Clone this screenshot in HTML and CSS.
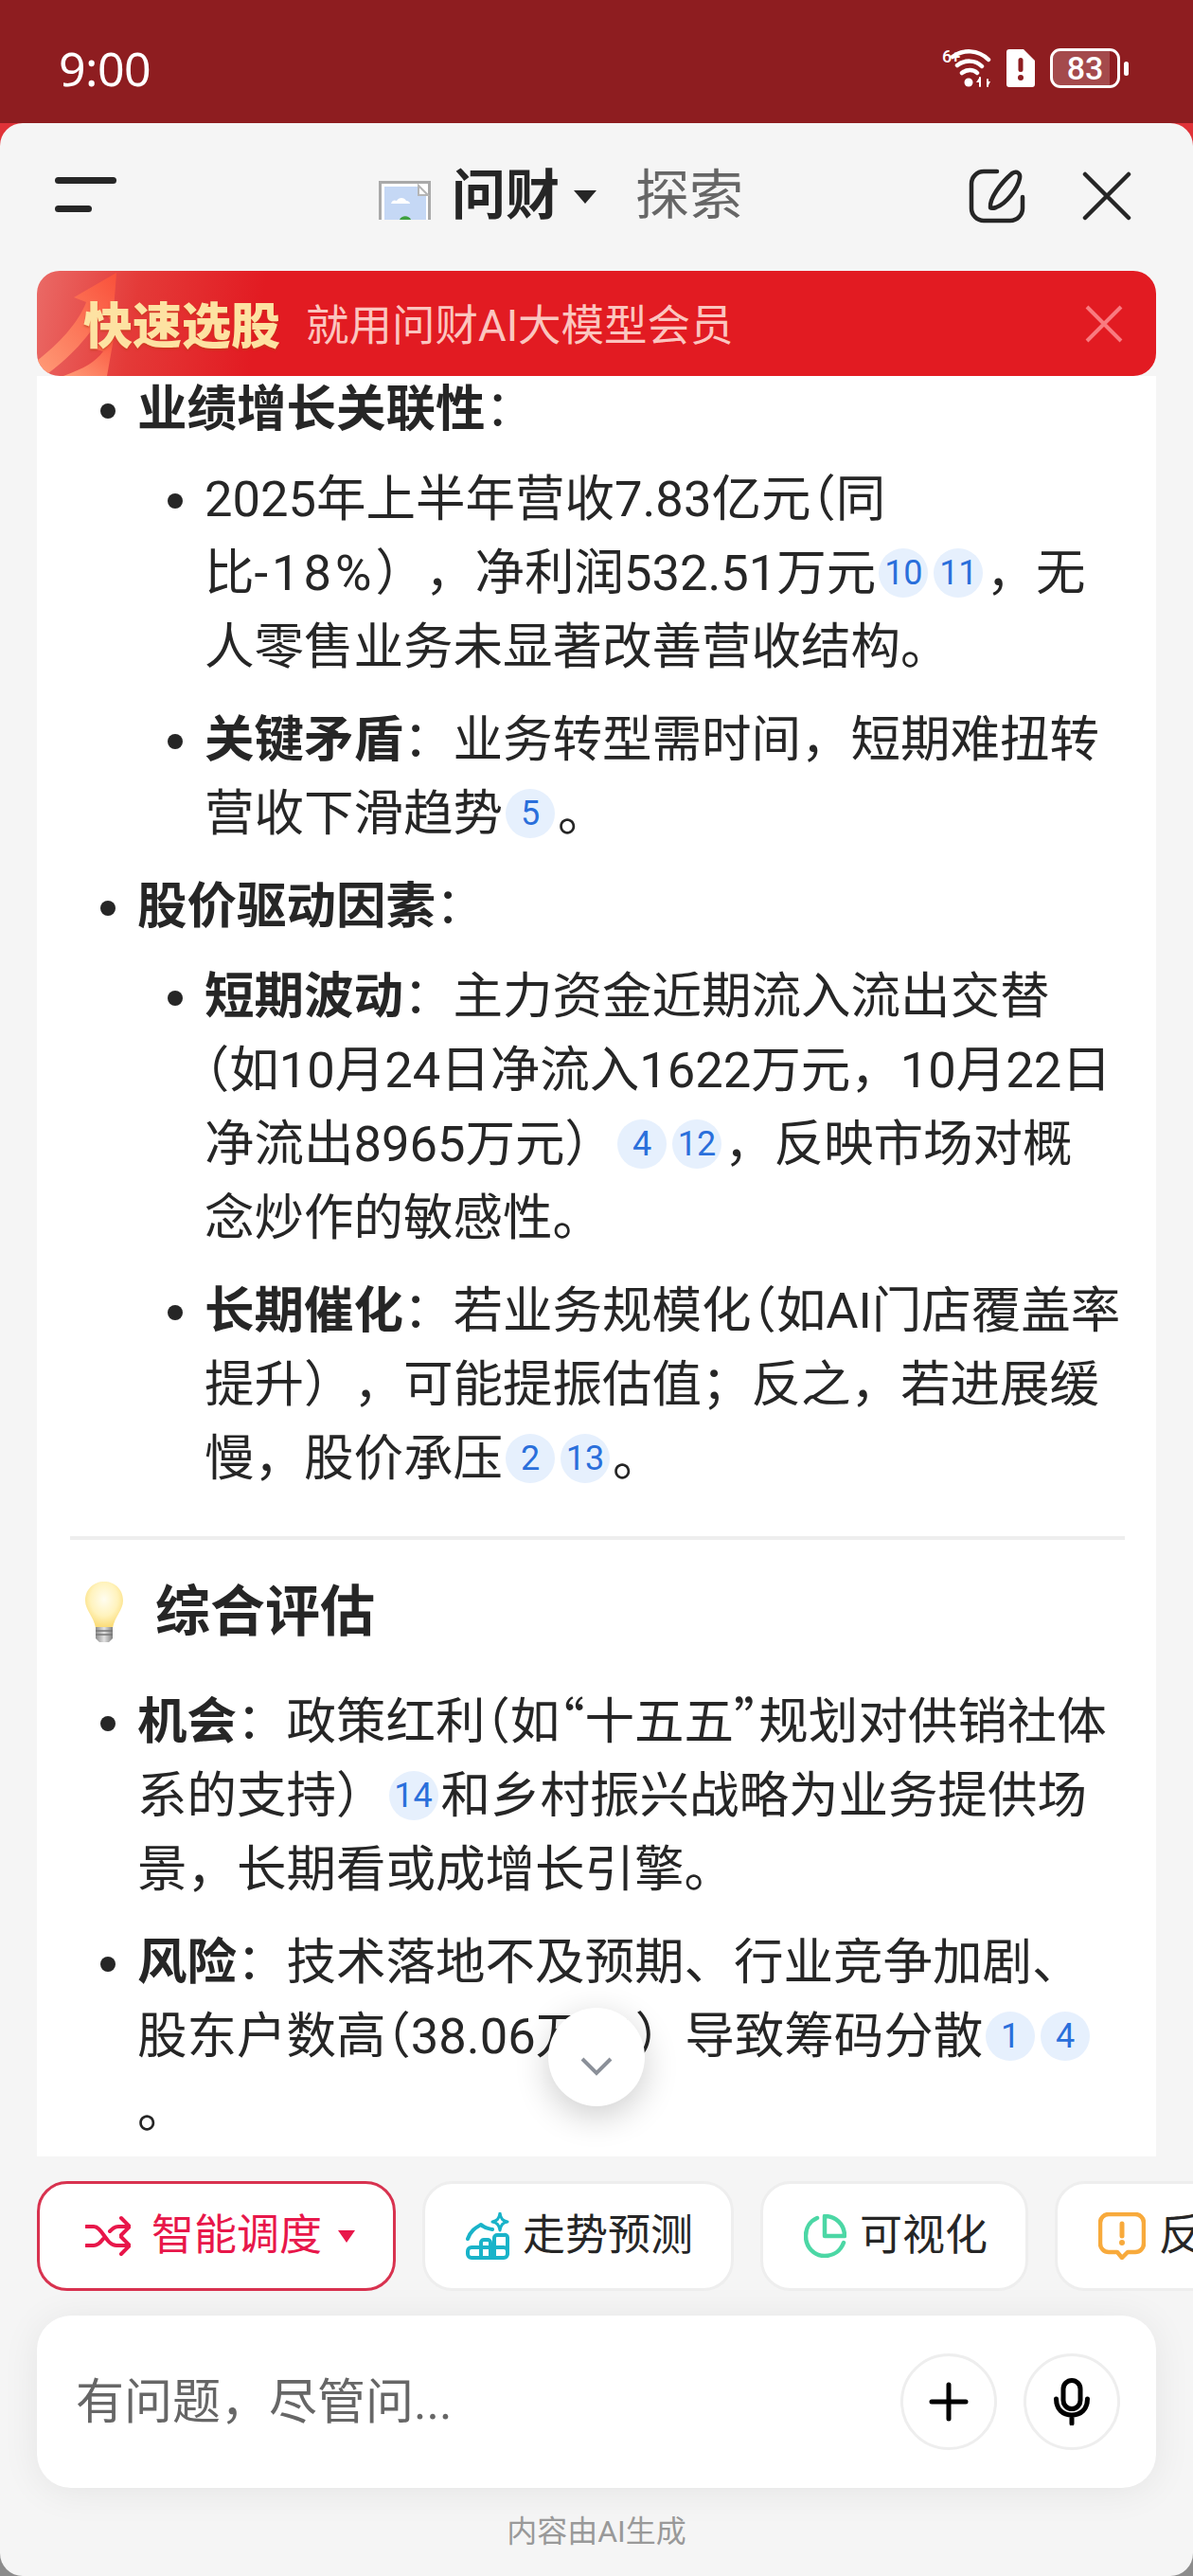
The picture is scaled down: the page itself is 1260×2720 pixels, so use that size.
FILE: index.html
```html
<!DOCTYPE html>
<html lang="zh-CN">
<head>
  <meta charset="UTF-8" />
  <meta name="viewport" content="width=device-width, initial-scale=1.0" />
  <title>问财</title>
  <link rel="stylesheet" href="styles.css">
</head>
<body>
  <div class="statusbar">
    <span class="time">9:00</span>
    <div class="status-icons">
      <div class="wifi">
        <span class="wifi-tag">6+</span>
        <svg width="50" height="42" viewBox="0 0 50 42" fill="none" stroke="#fff" stroke-width="4.5" stroke-linecap="round">
          <path d="M6 9C17 1 33 1 44 12"/>
          <path d="M11 18c8-6 19-6 26 1"/>
          <path d="M16 26c5-4 12-4 16 0"/>
          <circle cx="23" cy="36" r="4.5" fill="#fff" stroke="none"/>
          <path d="M35 31v9M43 33v7" stroke-width="2"/>
          <path d="M35 30l-4 6h4zM43 41l3-6h-3z" fill="#fff" stroke="none"/>
        </svg>
      </div>
      <svg class="sim" width="30" height="40" viewBox="0 0 30 40">
        <path d="M3 0h15l12 12v25a3 3 0 0 1-3 3H3a3 3 0 0 1-3-3V3a3 3 0 0 1 3-3z" fill="#fff"/>
        <rect x="12.500" y="9" width="5" height="15" rx="2.500" fill="#8e1d20"/>
        <circle cx="15" cy="30" r="3" fill="#8e1d20"/>
      </svg>
      <div class="battery">
        <div class="battery-body"><span class="battery-level"></span><span class="battery-num">83</span></div>
        <span class="battery-tip"></span>
      </div>
    </div>
  </div>

  <div class="sheet">
    <div class="topbar">
      <div class="menu-icon"><span class="menu-long"></span><span class="menu-short"></span></div>
      <div class="tabs">
        <svg class="broken-img" width="55" height="41" viewBox="0 0 55 41">
          <path d="M1.500 41V1.500h52V41" fill="#fff" stroke="#a9a9a9" stroke-width="3"/>
          <path d="M6 41V6h36l8 8v27z" fill="#c5d8f5"/>
          <path d="M42 5v10h10z" fill="#fff" stroke="#b5b5b5" stroke-width="2"/>
          <path d="M13 24c1-4 4-4 6-3 2-4 8-4 10 0 3 0 4 2 4 3z" fill="#fff"/>
          <path d="M22 41c2-5 10-5 12 0z" fill="#3fa03f"/>
        </svg>
        <span class="tab-active">问财</span>
        <span class="tab-caret"></span>
        <span class="tab-other">探索</span>
      </div>
      <div class="top-actions">
        <svg width="60" height="58" viewBox="0 0 60 58" fill="none" stroke="#262626" stroke-width="4.500" stroke-linecap="round">
          <path d="M30 3H16A13 13 0 0 0 3 16v26a13 13 0 0 0 13 13h28a13 13 0 0 0 13-13V30"/>
          <path d="M23 41c-1-9 10-25 23-36 5-3 9 0 8 5-2 11-14 27-25 31-3 1-6 1-6 0z"/>
        </svg>
        <svg width="52" height="52" viewBox="0 0 52 52" fill="none" stroke="#262626" stroke-width="4.500" stroke-linecap="round">
          <path d="M3 3l46 46M49 3L3 49"/>
        </svg>
      </div>
    </div>

    <div class="banner">
      <svg class="banner-art" width="150" height="111" viewBox="0 0 150 111">
        <defs>
          <linearGradient id="arrow" x1="0" y1="1" x2="1" y2="0">
            <stop offset="0" stop-color="#ff9c78"/>
            <stop offset="1" stop-color="#f9503a"/>
          </linearGradient>
        </defs>
        <path d="M0 95C22 78 44 55 52 33L39 28 84 2 80 55 70 42C58 68 32 94 8 111H0z" fill="url(#arrow)"/>
        <path d="M28 111C50 103 62 96 70 85L60 82 82 66 74 111z" fill="url(#arrow)"/>
      </svg>
      <span class="banner-title">快速选股</span>
      <span class="banner-text">就用问财AI大模型会员</span>
      <svg class="banner-close" width="40" height="40" viewBox="0 0 40 40" fill="none" stroke="#f97b80" stroke-width="4">
        <path d="M2 2l36 36M38 2L2 38"/>
      </svg>
    </div>

    <div class="content">
      <div class="article">
        <ul class="list">
          <li><b>业绩增长关联性</b>：
            <ul class="sublist">
              <li>2025年上半年营收7.83亿元<span class="half">（</span>同<br>比<span class="wide">-18%</span>），净利润532.51万元<span class="cite">10</span><span class="cite">11</span>，无<br>人零售业务未显著改善营收结构。</li>
              <li><b>关键矛盾</b>：业务转型需时间，短期难扭转<br>营收下滑趋势<span class="cite">5</span>。</li>
            </ul>
          </li>
          <li><b>股价驱动因素</b>：
            <ul class="sublist">
              <li><b>短期波动</b>：主力资金近期流入流出交替<br><span class="half">（</span>如10月24日净流入1622万元，10月22日<br>净流出8965万元）<span class="cite">4</span><span class="cite">12</span>，反映市场对概<br>念炒作的敏感性。</li>
              <li><b>长期催化</b>：若业务规模化<span class="half">（</span>如AI门店覆盖率<br>提升），可能提振估值；反之，若进展缓<br>慢，股价承压<span class="cite">2</span><span class="cite">13</span>。</li>
            </ul>
          </li>
        </ul>
        <hr class="divider">
        <h3 class="section-title">
          <svg class="bulb" width="42" height="66" viewBox="0 0 42 66">
            <defs>
              <radialGradient id="glow" cx="0.5" cy="0.38" r="0.6">
                <stop offset="0" stop-color="#fffdf0"/>
                <stop offset="0.6" stop-color="#fff3bd"/>
                <stop offset="1" stop-color="#fbdc78"/>
              </radialGradient>
              <linearGradient id="base" x1="0" y1="0" x2="1" y2="0">
                <stop offset="0" stop-color="#8c8c8c"/>
                <stop offset="0.5" stop-color="#e2e2e2"/>
                <stop offset="1" stop-color="#808080"/>
              </linearGradient>
            </defs>
            <path d="M21 1C10 1 1 9 1 21c0 10 9 17 11 29h18c2-12 11-19 11-29C41 9 32 1 21 1z" fill="url(#glow)"/>
            <path d="M12 49h18v12l-4 4H16l-4-4z" fill="url(#base)"/>
            <path d="M12 53h18M12 57h18" stroke="#777" stroke-width="1.500"/>
          </svg>
          综合评估
        </h3>
        <ul class="list">
          <li><b>机会</b>：政策红利<span class="half">（</span>如<span class="half">“</span>十五五<span class="half">”</span>规划对供销社体<br>系的支持）<span class="cite">14</span>和乡村振兴战略为业务提供场<br>景，长期看或成增长引擎。</li>
          <li><b>风险</b>：技术落地不及预期、行业竞争加剧、<br>股东户数高<span class="half">（</span>38.06万户）导致筹码分散<span class="cite">1</span><span class="cite">4</span><br>。</li>
        </ul>
      </div>
      <div class="scroll-down">
        <svg width="34" height="20" viewBox="0 0 34 20" fill="none" stroke="#8b9099" stroke-width="4">
          <path d="M2 2l15 15L32 2"/>
        </svg>
      </div>
    </div>

    <div class="chips">
      <div class="chip chip-on">
        <svg width="48" height="44" viewBox="0 0 48 44" fill="none" stroke="#e8174a" stroke-width="4" stroke-linecap="round" stroke-linejoin="round">
          <path d="M1 12h8c9 0 13 20 24 20h12"/>
          <path d="M1 32h8c4 0 7-3 10-7M26 17c3-3 5-5 9-5h10"/>
          <path d="M38 3l9 9-9 9M38 23l9 9-9 9"/>
        </svg>
        <span class="chip-label">智能调度</span>
        <span class="chip-caret"></span>
      </div>
      <div class="chip">
        <svg width="46" height="50" viewBox="0 0 46 50" fill="none" stroke="#19b3c9" stroke-width="4" stroke-linecap="round" stroke-linejoin="round">
          <path d="M2 28c3-9 9-12 14-15 4 4 7 4 12 5"/>
          <rect x="2" y="37" width="42" height="11" rx="4"/>
          <path d="M16 48V32a3 3 0 0 1 3-3h4a3 3 0 0 1 3 3v16M30 48V27a3 3 0 0 1 3-3h7a3 3 0 0 1 4 3v16"/>
          <path d="M36 1c1 6 3 8 8 9-5 1-7 3-8 9-1-6-3-8-8-9 5-1 7-3 8-9z" stroke-width="3"/>
        </svg>
        <span class="chip-label">走势预测</span>
      </div>
      <div class="chip">
        <svg width="45" height="46" viewBox="0 0 45 46" fill="none" stroke="#4cd7a5" stroke-width="4.500" stroke-linecap="round" stroke-linejoin="round">
          <path d="M14 4C7 7 2 14 2 23c0 12 9 21 20 21 10 0 17-6 20-14"/>
          <path d="M22 2c11 0 21 8 21 21H22z"/>
        </svg>
        <span class="chip-label">可视化</span>
      </div>
      <div class="chip">
        <svg width="50" height="50" viewBox="0 0 50 50" fill="none" stroke="#f8aa3c" stroke-width="4.500" stroke-linejoin="round">
          <path d="M11 2h28a9 9 0 0 1 9 9v22a9 9 0 0 1-9 9h-8l-6 6-5-6h-9a9 9 0 0 1-9-9V11a9 9 0 0 1 9-9z"/>
          <path d="M25 12v13" stroke-linecap="round" stroke-width="5"/>
          <circle cx="25" cy="32" r="3" fill="#f8aa3c" stroke="none"/>
        </svg>
        <span class="chip-label">反馈</span>
      </div>
    </div>

    <div class="composer">
      <div class="input-card">
        <span class="placeholder">有问题，尽管问...</span>
        <div class="input-actions">
          <div class="round-btn">
            <svg width="42" height="42" viewBox="0 0 42 42" fill="none" stroke="#000" stroke-width="5" stroke-linecap="round">
              <path d="M21 3v36M3 21h36"/>
            </svg>
          </div>
          <div class="round-btn">
            <svg width="38" height="50" viewBox="0 0 38 50" fill="none" stroke="#000" stroke-width="5" stroke-linecap="round">
              <rect x="10" y="2.500" width="18" height="30" rx="9"/>
              <path d="M2.500 22c0 11 7 17 16.500 17s16.500-6 16.500-17M19 39v9"/>
            </svg>
          </div>
        </div>
      </div>
    </div>

    <div class="disclaimer">内容由AI生成</div>
  </div>
</body>
</html>
```

FILE: styles.css
```css
* {
  box-sizing: border-box;
}
html, body {
  margin: 0;
  padding: 0;
}
body {
  width: 1260px;
  height: 2720px;
  overflow: hidden;
  background: linear-gradient(#e03238 0, #e03238 200px, #8c8c8c 2600px);
  font-family: Roboto, "Noto Sans CJK SC", sans-serif;
  color: #262626;
  text-spacing-trim: space-all;
}

/* status bar */
.statusbar {
  height: 130px;
  background: #8e1d20;
  display: flex;
  justify-content: space-between;
  align-items: center;
  padding: 14px 68px 0 62px;
  color: #fff;
}
.time {
  font-size: 50px;
  font-family: "Noto Sans", sans-serif;
  letter-spacing: -0.5px;
}
.status-icons {
  display: flex;
  align-items: center;
  gap: 13px;
}
.wifi {
  position: relative;
  width: 55px;
  height: 42px;
  display: flex;
  justify-content: flex-end;
}
.wifi-tag {
  position: absolute;
  left: 0;
  top: -2px;
  font-size: 18px;
  line-height: 22px;
  font-weight: 500;
  letter-spacing: -1px;
}
.battery {
  display: flex;
  align-items: center;
  gap: 4px;
  margin-left: 3px;
}
.battery-body {
  position: relative;
  width: 74px;
  height: 42px;
  border: 3px solid #fff;
  border-radius: 11px;
  overflow: hidden;
  display: flex;
  justify-content: center;
  align-items: center;
}
.battery-level {
  position: absolute;
  left: 0;
  top: 0;
  bottom: 0;
  width: 88%;
  background: rgba(255,255,255,0.2);
}
.battery-num {
  position: relative;
  font-size: 34px;
  font-weight: 500;
  line-height: 1;
}
.battery-tip {
  width: 5px;
  height: 15px;
  background: #fff;
  border-radius: 3px;
}

/* sheet */
.sheet {
  height: 2590px;
  background: #f5f5f5;
  border-radius: 24px;
  display: flex;
  flex-direction: column;
}
.topbar {
  height: 156px;
  flex-shrink: 0;
  position: relative;
  display: flex;
  align-items: center;
  justify-content: space-between;
  padding: 0 65px 0 58px;
}
.menu-icon {
  display: flex;
  flex-direction: column;
  gap: 23px;
  margin-bottom: 5px;
}
.menu-long, .menu-short {
  display: block;
  height: 7px;
  background: #262626;
  border-radius: 4px;
}
.menu-long {
  width: 65px;
}
.menu-short {
  width: 39px;
}
.tabs {
  position: absolute;
  left: 400px;
  top: 49px;
  height: 56px;
  display: flex;
  align-items: center;
  font-size: 57px;
  line-height: 56px;
}
.broken-img {
  margin-top: 9px;
}
.tab-active {
  margin-left: 22px;
  font-weight: 700;
}
.tab-caret {
  margin-left: 15px;
  margin-top: 2px;
  border-left: 12px solid transparent;
  border-right: 12px solid transparent;
  border-top: 14px solid #262626;
}
.tab-other {
  margin-left: 41px;
  color: #666;
}
.top-actions {
  display: flex;
  align-items: center;
  gap: 60px;
  margin-bottom: 3px;
}

/* promo banner */
.banner {
  height: 111px;
  flex-shrink: 0;
  margin: 0 39px;
  position: relative;
  z-index: 2;
  overflow: hidden;
  display: flex;
  align-items: center;
  border-radius: 24px;
  padding: 0 35px 0 49px;
  background: linear-gradient(100deg, #ea6a66 0, #e43a38 110px, #e21b22 240px);
}
.banner-art {
  position: absolute;
  left: 0;
  top: 0;
}
.banner-title {
  position: relative;
  font-size: 52px;
  font-weight: 900;
  color: #fde2a2;
  text-shadow: 0 2px 2px rgba(190,60,20,0.5);
  margin-bottom: 2px;
}
.banner-text {
  margin-left: 27px;
  margin-bottom: 4px;
  font-size: 45.5px;
  color: #fbc5bf;
}
.banner-close {
  margin-left: auto;
}

/* answer text */
.content {
  flex: 1;
  min-height: 0;
  margin: 0 39px;
  background: #fff;
  position: relative;
  overflow: hidden;
}
.article {
  margin-top: -4px;
  padding: 0 33px 0 35px;
  font-size: 52.5px;
  line-height: 78px;
  white-space: nowrap;
}
.list, .sublist {
  list-style: disc;
  margin: 0;
}
.list {
  padding: 0 0 0 71px;
}
.sublist {
  padding: 0 0 0 71px;
  margin-top: 17px;
}
.list li + li {
  margin-top: 20px;
}
b {
  font-weight: 700;
}
.half {
  font-family: "Noto Sans CJK SC", sans-serif;
  font-feature-settings: "halt";
  line-height: 1;
}
.wide {
  letter-spacing: 4px;
}
.cite {
  display: inline-block;
  width: 52px;
  height: 52px;
  line-height: 52px;
  margin: 0 3px;
  border-radius: 50%;
  background: #e6f0fd;
  color: #2a6fdb;
  font-size: 36px;
  text-align: center;
  vertical-align: 6px;
}
.divider {
  margin: 43px 0 0;
  border: 0;
  height: 4px;
  background: #eeeeee;
}
.section-title {
  margin: 34px 0 35px;
  display: flex;
  align-items: center;
  gap: 33px;
  font-size: 58px;
  line-height: 84px;
  font-weight: 700;
  padding-left: 15px;
}
.scroll-down {
  position: absolute;
  left: 540px;
  top: 1723px;
  width: 102px;
  height: 104px;
  border-radius: 50%;
  background: #fff;
  box-shadow: 0 10px 36px rgba(0,0,0,0.2);
  display: flex;
  justify-content: center;
  align-items: center;
  padding-top: 20px;
}

/* chips */
.chips {
  height: 116px;
  flex-shrink: 0;
  margin-top: 26px;
  padding-left: 39px;
  display: flex;
  gap: 28px;
  overflow: hidden;
}
.chip {
  height: 116px;
  flex-shrink: 0;
  display: flex;
  align-items: center;
  gap: 14px;
  padding: 0 40px 0 43px;
  background: #fff;
  border: 3px solid #eeeeee;
  border-radius: 32px;
  font-size: 45px;
}
.chip-label {
  margin-bottom: 10px;
}
.chip-on {
  border-color: #d8324f;
  color: #e8174a;
  padding: 0 40px 0 48px;
  gap: 22px;
  width: 379px;
}
.chip-caret {
  margin-left: -5px;
  border-left: 9px solid transparent;
  border-right: 9px solid transparent;
  border-top: 13px solid #e8174a;
}

/* input */
.composer {
  height: 234px;
  flex-shrink: 0;
  padding: 26px 39px;
}
.input-card {
  height: 182px;
  background: #fff;
  border-radius: 36px;
  box-shadow: 0 4px 40px rgba(0,0,0,0.07);
  display: flex;
  align-items: center;
  justify-content: space-between;
  padding: 0 38px 0 41px;
}
.placeholder {
  font-size: 51px;
  color: #666;
  margin-bottom: 9px;
}
.input-actions {
  display: flex;
  gap: 28px;
}
.round-btn {
  width: 102px;
  height: 102px;
  border-radius: 50%;
  border: 3px solid #eeeeee;
  display: flex;
  justify-content: center;
  align-items: center;
}
.disclaimer {
  text-align: center;
  font-size: 32px;
  line-height: 36px;
  margin: 2px 0 29px;
  color: #999;
}
```
